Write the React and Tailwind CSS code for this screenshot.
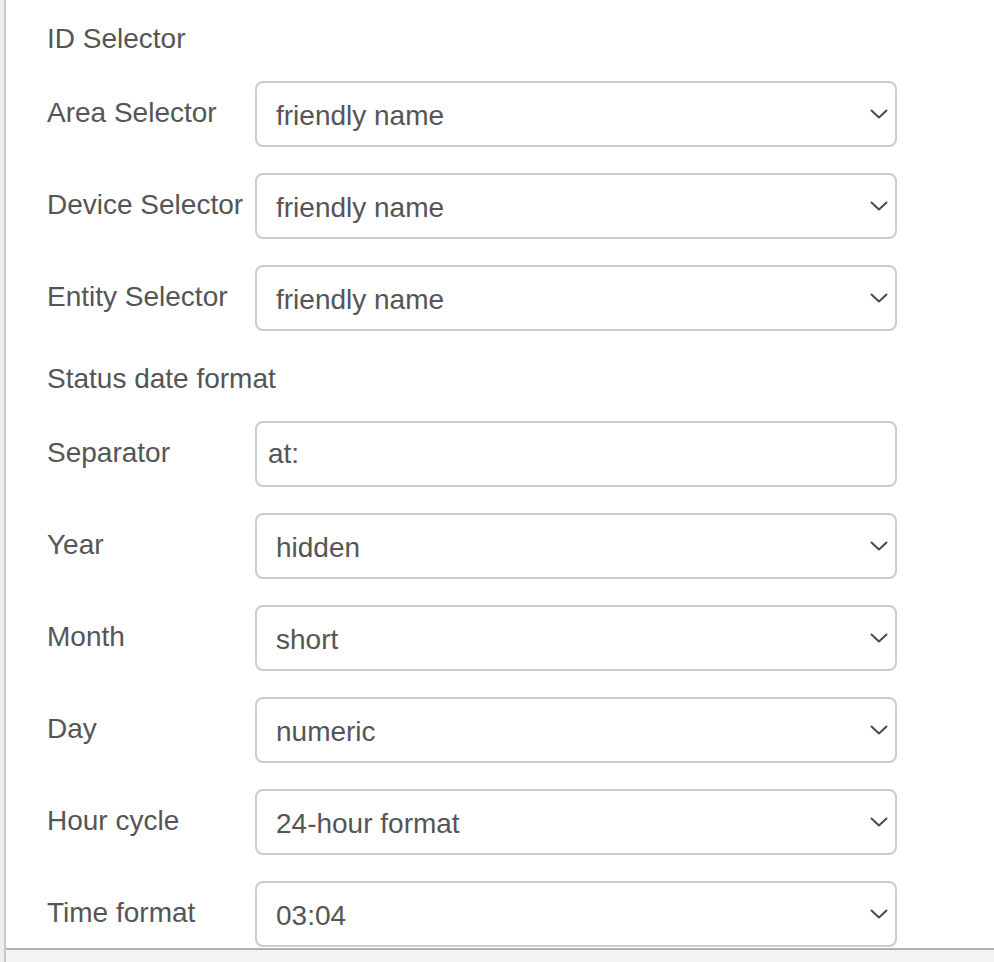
import React from "react";

const Chevron = () => (
  <svg width="18" height="10" viewBox="0 0 18 10" fill="none" className="absolute right-[7px] top-1/2 -translate-y-1/2">
    <polyline points="1.5,1.5 9,8.5 16.5,1.5" stroke="#4a4a4a" strokeWidth="2" strokeLinecap="round" strokeLinejoin="round" />
  </svg>
);

const Field = ({ label, value, select = true }) => (
  <div className="flex items-center mb-[26px]">
    <label className="w-[208px] shrink-0 text-[28px] leading-[32px] text-[#555] -mt-[2px] whitespace-nowrap">{label}</label>
    <div className="relative w-[642px] h-[66px] border-2 border-[#cccccc] rounded-[8px] bg-white flex items-center pl-[19px] pr-[40px]">
      <span className={`text-[28px] text-[#555] ${select ? "mt-[4px]" : "-ml-[8px]"}`}>{value}</span>
      {select && <Chevron />}
    </div>
  </div>
);

const Header = ({ children }) => (
  <div className="h-[40px] flex items-center pt-[3px] mb-[24px] text-[28px] text-[#555]">{children}</div>
);

export default function App() {
  return (
    <div className="w-[994px] h-[962px] flex bg-[#f3f3f3] overflow-hidden" style={{ fontFamily: '"Liberation Sans", Arial, sans-serif' }}>
      <div className="w-[4px] shrink-0 bg-[#eeeeee]" />
      <div className="flex-1 flex flex-col border-l-2 border-[#c8c8c8]">
        <div className="h-[948px] bg-white overflow-hidden pl-[41px] pt-[17px]">
          <Header>ID Selector</Header>
          <Field label="Area Selector" value="friendly name" />
          <Field label="Device Selector" value="friendly name" />
          <Field label="Entity Selector" value="friendly name" />
          <Header>Status date format</Header>
          <Field label="Separator" value="at:" select={false} />
          <Field label="Year" value="hidden" />
          <Field label="Month" value="short" />
          <Field label="Day" value="numeric" />
          <Field label="Hour cycle" value="24-hour format" />
          <Field label="Time format" value="03:04" />
        </div>
        <div className="h-[2px] bg-[#b0b0b0]" />
        <div className="flex-1 bg-[#f3f3f3]" />
      </div>
    </div>
  );
}
